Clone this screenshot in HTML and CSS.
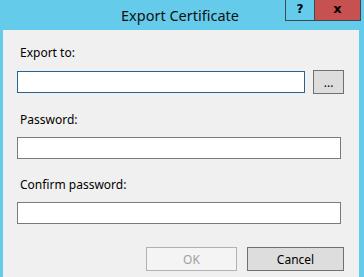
FILE: index.html
```html
<!DOCTYPE html>
<html lang="en">
<head>
  <meta charset="UTF-8" />
  <title>Export Certificate</title>
  <link rel="stylesheet" href="styles.css">
</head>
<body>

<div class="window">
  <div class="titlebar">
    <div class="title">Export Certificate</div>
    <div class="caption-buttons">
      <span class="cap-btn help">?</span>
      <span class="cap-btn close">x</span>
    </div>
  </div>

  <div class="content">
    <label class="field-label first">Export to:</label>
    <div class="row">
      <input type="text" class="text-input focused">
      <button class="browse">...</button>
    </div>

    <label class="field-label">Password:</label>
    <input type="password" class="text-input wide">

    <label class="field-label">Confirm password:</label>
    <input type="password" class="text-input wide">

    <div class="actions">
      <button class="btn ok" disabled>OK</button>
      <button class="btn cancel">Cancel</button>
    </div>
  </div>
</div>

</body>
</html>
```

FILE: styles.css
```css
:root {
  --frame: #65cbea;
  --face: #f0f0f0;
  --border: #7a7a7a;
  --focus: #2b628f;
}

* {
  margin: 0;
  padding: 0;
  box-sizing: border-box;
  font-family: 'Noto Sans', 'Open Sans', sans-serif;
}

html, body {
  width: 364px;
  height: 277px;
  overflow: hidden;
  background: var(--frame);
}

.window {
  height: 277px;
  background: var(--frame);
  padding: 0 5px 0 3px;
  display: flex;
  flex-direction: column;
}

/* title bar */
.titlebar {
  position: relative;
  height: 30px;
  flex-shrink: 0;
}

.title {
  text-align: center;
  font-size: 14.5px;
  line-height: 30px;
  color: #111;
  padding-right: 2px;
}

.caption-buttons {
  position: absolute;
  top: 0;
  right: -2px;
  display: flex;
}

.cap-btn {
  display: flex;
  justify-content: center;
  align-items: center;
  height: 21px;
  border: 1px solid #3b4a52;
  border-top: none;
  font-family: 'DejaVu Sans', sans-serif;
  font-weight: bold;
  color: #000;
}

.cap-btn.help {
  width: 29px;
  border-right: none;
  font-size: 12px;
  padding-bottom: 2px;
}

.cap-btn.close {
  width: 47px;
  background: #c75050;
  font-size: 13px;
  padding-bottom: 3px;
}

/* dialog body */
.content {
  flex: 1;
  background: var(--face);
  padding: 15px 15px 0 14px;
  display: flex;
  flex-direction: column;
}

.field-label {
  font-size: 12px;
  line-height: 16px;
  padding-left: 3px;
  margin-top: 18px;
  margin-bottom: 9px;
  color: #000;
}

.field-label.first {
  margin-top: 0;
}

.row {
  display: flex;
  align-items: center;
  gap: 8px;
}

.text-input {
  height: 22px;
  border: 1px solid var(--border);
  background: #fff;
  outline: none;
}

.text-input.focused {
  width: 289px;
  border-color: var(--focus);
}

.text-input.wide {
  width: 324px;
}

.browse {
  width: 31px;
  height: 24px;
  background: #dddddd;
  border: 1px solid #707070;
  font-size: 12px;
  line-height: 12px;
  padding-top: 2px;
  color: #000;
}

.actions {
  display: flex;
  justify-content: flex-end;
  gap: 10px;
  margin-top: 23px;
}

.btn {
  height: 24px;
  font-size: 12px;
  border: 1px solid #707070;
  background: #dddddd;
  color: #000;
}

.btn.ok {
  width: 91px;
  background: #f4f4f4;
  border-color: #adb2b5;
  color: #a0a0a0;
}

.btn.cancel {
  width: 97px;
}
```
